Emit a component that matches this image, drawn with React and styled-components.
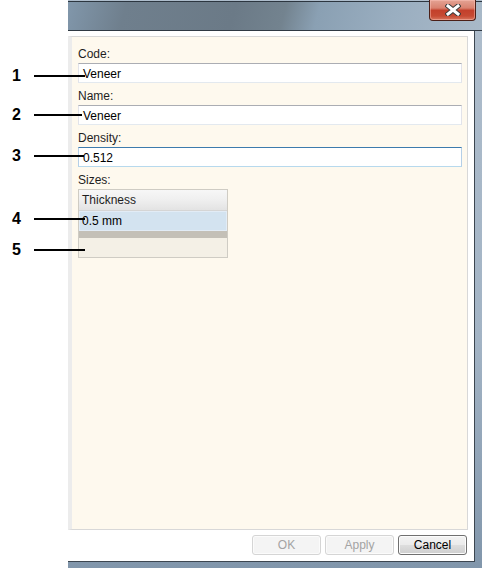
import React from "react";
import styled, { createGlobalStyle } from "styled-components";

const GlobalStyle = createGlobalStyle`
  html, body {
    margin: 0;
    padding: 0;
    background: #ffffff;
  }
  body {
    font-family: "Segoe UI", "Liberation Sans", Arial, sans-serif;
  }
`;

const Page = styled.div`
  position: relative;
  width: 482px;
  height: 568px;
  display: flex;
  background: #ffffff;
  overflow: hidden;
`;

const Gutter = styled.div`
  width: 68px;
  flex: none;
`;

const Window = styled.div`
  flex: 1;
  display: flex;
  flex-direction: column;
  background: linear-gradient(180deg, #aebdcc 0%, #a3b4c5 60%, #8196ab 100%);
`;

const TitleBar = styled.div`
  position: relative;
  height: 28px;
  margin-top: 1px;
  flex: none;
  border-top: 1px solid #2c3640;
  border-bottom: 1px solid #2f3943;
  background: linear-gradient(
    105deg,
    #8197ab 0%,
    #6f7f8d 14%,
    #6b7a87 40%,
    #73838f 52%,
    #8aa0b3 60%,
    #9aaec0 78%,
    #a9b9c8 100%
  );
`;

const CloseButton = styled.div`
  position: absolute;
  right: 6px;
  top: -2px;
  width: 45px;
  height: 20px;
  border: 1px solid #4b1f17;
  border-top: none;
  border-radius: 0 0 4px 4px;
  background: linear-gradient(180deg, #e4a394 0%, #d98270 40%, #c3402b 52%, #c64a33 80%, #d8765e 100%);
  box-shadow: inset 0 0 0 1px rgba(255, 200, 190, 0.45);
  display: flex;
  align-items: center;
  justify-content: center;
`;

const Client = styled.div`
  flex: 1;
  display: flex;
  flex-direction: column;
  background: #ffffff;
  margin-right: 7px;
  margin-bottom: 6px;
  border-right: 1px solid #3c4650;
  border-bottom: 1px solid #3c4650;
  padding-top: 5px;
  padding-right: 6px;
`;

const Panel = styled.div`
  flex: 1;
  background: #fef9ee;
  border: 1px solid #d8d8d8;
  border-left: 4px solid #ececec;
  padding: 4px 5px 0 6px;
  display: flex;
  flex-direction: column;
`;

const FieldLabel = styled.div`
  height: 22px;
  padding-top: 5px;
  box-sizing: border-box;
  font-size: 12px;
  line-height: 16px;
  color: #1e1e1e;
`;

const TextBox = styled.div`
  height: 20px;
  box-sizing: border-box;
  border: 1px solid ${({ focused }) => (focused ? "#b5cfe7" : "#e2e3ea")};
  border-top-color: ${({ focused }) => (focused ? "#3d7bad" : "#abadb3")};
  border-bottom-color: ${({ focused }) => (focused ? "#b7d9ed" : "#e3e9ef")};
  background: #ffffff;
  padding: 2px 4px 0;
  font-size: 12px;
  line-height: 16px;
  color: #000000;
`;

const Grid = styled.div`
  width: 150px;
  height: 69px;
  box-sizing: border-box;
  border: 1px solid #cfccc4;
  background: #f4f0e6;
  display: flex;
  flex-direction: column;
`;

const GridHeader = styled.div`
  height: 21px;
  box-sizing: border-box;
  background: linear-gradient(180deg, #f7f7f7 0%, #efefef 50%, #e3e3e3 100%);
  border-bottom: 1px solid #d5d5d5;
  padding-left: 3px;
  font-size: 12px;
  line-height: 21px;
  color: #1e1e1e;
`;

const GridRow = styled.div`
  height: 20px;
  box-sizing: border-box;
  background: ${({ selected }) => (selected ? "#d3e3f0" : "transparent")};
  border: 1px solid ${({ selected }) => (selected ? "#e2ecf6" : "transparent")};
  padding-left: 2px;
  font-size: 12px;
  line-height: 18px;
  color: #000000;
`;

const GridBar = styled.div`
  height: 7px;
  background: #c4c0b7;
`;

const Footer = styled.div`
  height: 31px;
  box-sizing: border-box;
  flex: none;
  display: flex;
  justify-content: flex-end;
  gap: 4px;
  padding: 5px 1px 0 0;
`;

const Button = styled.div`
  width: 69px;
  height: 20px;
  box-sizing: border-box;
  border: 1px solid ${({ disabled }) => (disabled ? "#d5d5d5" : "#707070")};
  border-radius: 3px;
  background: ${({ disabled }) =>
    disabled
      ? "#f4f4f4"
      : "linear-gradient(180deg, #f3f3f3 0%, #ebebeb 48%, #dddddd 52%, #cfcfcf 100%)"};
  box-shadow: inset 0 0 0 1px ${({ disabled }) => (disabled ? "#fbfbfb" : "#fcfcfc")};
  color: ${({ disabled }) => (disabled ? "#a3a3a3" : "#000000")};
  font-size: 12px;
  line-height: 18px;
  text-align: center;
`;

const Marker = styled.div`
  position: absolute;
  left: 12px;
  top: ${({ y }) => y - 9}px;
  font-family: "Liberation Sans", Arial, sans-serif;
  font-weight: bold;
  font-size: 16px;
  line-height: 18px;
  color: #000000;
`;

const Leader = styled.div`
  position: absolute;
  left: 34px;
  top: ${({ y }) => y - 1}px;
  width: ${({ w }) => w}px;
  height: 2px;
  background: #000000;
`;

const annotations = [
  { n: 1, y: 76, w: 51 },
  { n: 2, y: 115, w: 48 },
  { n: 3, y: 156, w: 50 },
  { n: 4, y: 219, w: 51 },
  { n: 5, y: 250, w: 51 },
];

function CloseGlyph() {
  return (
    <svg width="16" height="12" viewBox="0 0 16 12">
      <path d="M3 2 L13 10 M13 2 L3 10" stroke="#3b3b3b" strokeWidth="5" strokeLinecap="square" />
      <path d="M3 2 L13 10 M13 2 L3 10" stroke="#ffffff" strokeWidth="3" strokeLinecap="square" />
    </svg>
  );
}

export default function App() {
  return (
    <>
      <GlobalStyle />
      <Page>
        <Gutter />
        <Window>
          <TitleBar>
            <CloseButton>
              <CloseGlyph />
            </CloseButton>
          </TitleBar>
          <Client>
            <Panel>
              <FieldLabel>Code:</FieldLabel>
              <TextBox>Veneer</TextBox>
              <FieldLabel>Name:</FieldLabel>
              <TextBox>Veneer</TextBox>
              <FieldLabel>Density:</FieldLabel>
              <TextBox focused>0.512</TextBox>
              <FieldLabel>Sizes:</FieldLabel>
              <Grid>
                <GridHeader>Thickness</GridHeader>
                <GridRow selected>0.5 mm</GridRow>
                <GridBar />
              </Grid>
            </Panel>
            <Footer>
              <Button disabled>OK</Button>
              <Button disabled>Apply</Button>
              <Button>Cancel</Button>
            </Footer>
          </Client>
        </Window>

        {annotations.map((a) => (
          <React.Fragment key={a.n}>
            <Marker y={a.y}>{a.n}</Marker>
            <Leader y={a.y} w={a.w} />
          </React.Fragment>
        ))}
      </Page>
    </>
  );
}
